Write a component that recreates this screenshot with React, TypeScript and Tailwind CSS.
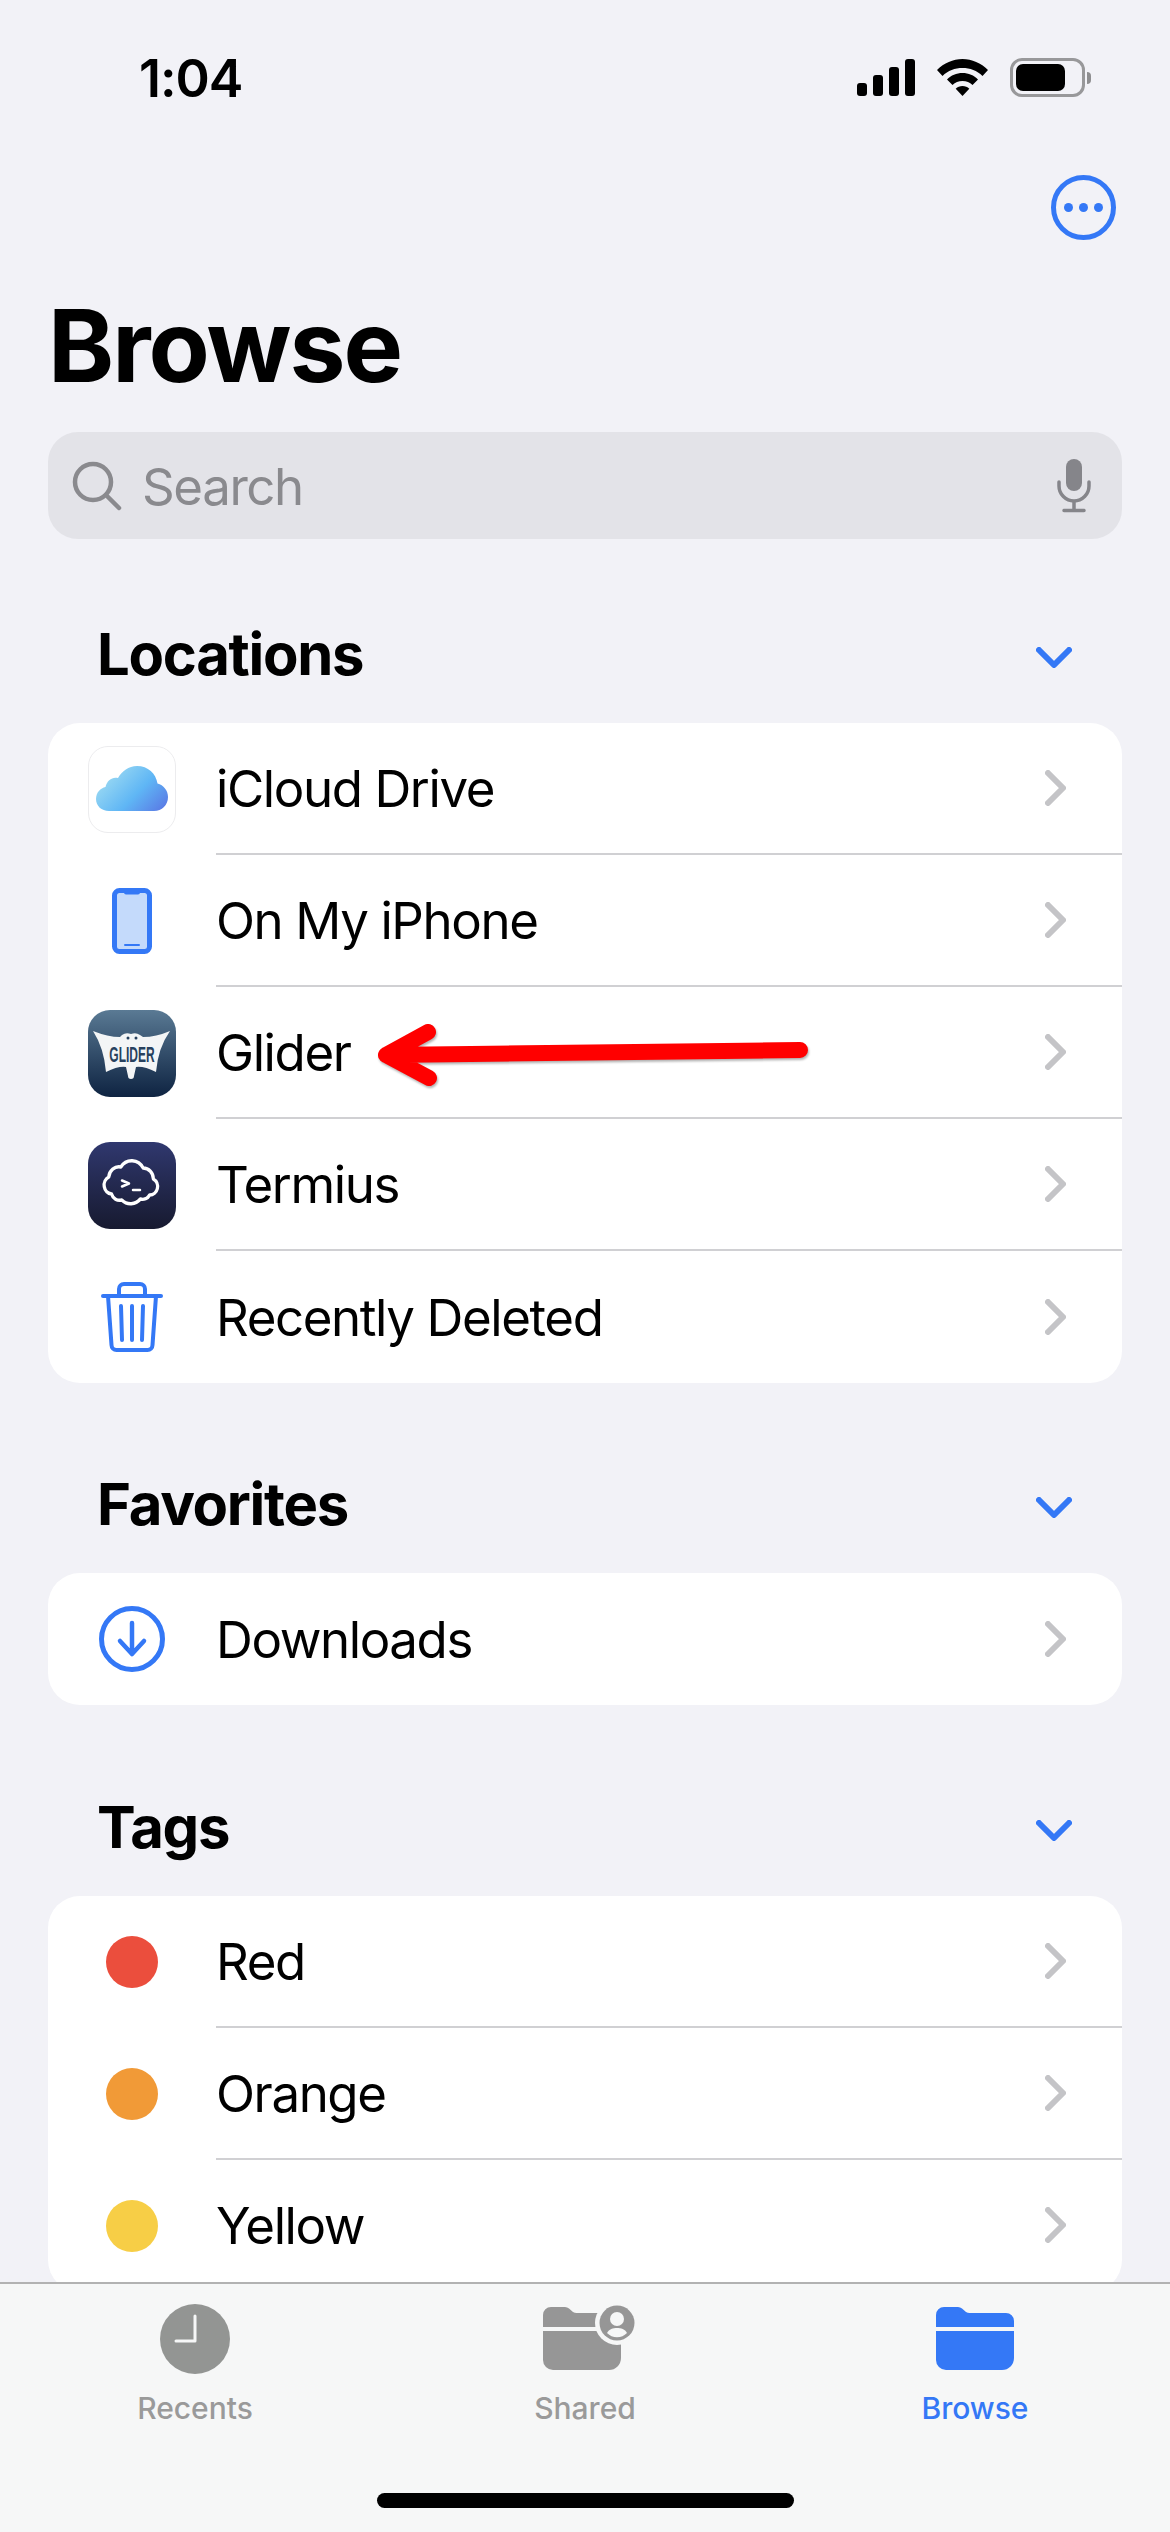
import type { ReactNode } from "react";

const BLUE = "#3478f6";

const Chevron = () => (
  <svg width="21" height="36" viewBox="0 0 21 36" fill="none" className="shrink-0">
    <path d="M3 3 18 18 3 33" stroke="#c4c4c7" strokeWidth="6" strokeLinecap="round" strokeLinejoin="round" />
  </svg>
);

const DownChevron = () => (
  <svg width="36" height="21" viewBox="0 0 36 21" fill="none" className="mt-[6px]">
    <path d="M3 3 18 18 33 3" stroke={BLUE} strokeWidth="6" strokeLinecap="round" strokeLinejoin="round" />
  </svg>
);

const ICloudIcon = () => (
  <div className="w-[88px] h-[87px] rounded-[20px] border border-[#ececee] bg-white flex items-center justify-center">
    <svg width="72" height="46" viewBox="0 0 72 46">
      <defs>
        <linearGradient id="cloud" x1="0" y1="0.2" x2="1" y2="0.8">
          <stop offset="0" stopColor="#a6e0f2" />
          <stop offset="0.6" stopColor="#5fb6f5" />
          <stop offset="1" stopColor="#5a7fe6" />
        </linearGradient>
      </defs>
      <path
        d="M13 45C5.500 45 0 40 0 33c0-6.500 4.500-11 9.500-12C11 14 16.500 10.500 22 12 26 5 32.500 0 41 0c11 0 19 7.500 20.500 17.500C67.500 19 72 24.500 72 31c0 8-6 14-14 14z"
        fill="url(#cloud)"
      />
    </svg>
  </div>
);

const PhoneIcon = () => (
  <svg width="40" height="66" viewBox="0 0 40 66">
    <rect x="2.500" y="2.500" width="35" height="61" rx="5" fill="#c4dafb" stroke={BLUE} strokeWidth="5" />
    <path d="M12 2h16v2.500a2 2 0 0 1-2 2H14a2 2 0 0 1-2-2z" fill={BLUE} />
    <rect x="12" y="56" width="16" height="2" rx="1" fill={BLUE} />
  </svg>
);

const GliderIcon = () => (
  <div className="w-[88px] h-[87px] rounded-[22px] bg-gradient-to-b from-[#5a7a94] to-[#0f2442]">
    <svg width="88" height="87" viewBox="0 0 88 87">
      <path
        d="M5 21 Q20 27 32 27 L34 25 Q38 22 43 24 Q48 22 52 25 L55 27 Q68 27 82 21 Q70 38 68 62 Q56 56 48 57 L46 66 A3 3 0 0 1 40 66 L38 57 Q30 56 18 62 Q16 38 5 21z"
        fill="#f3f5f6"
      />
      <circle cx="40" cy="28" r="1.500" fill="#27415e" />
      <circle cx="48" cy="28" r="1.500" fill="#27415e" />
      <text
        transform="translate(44 52) scale(1 1.900)"
        textAnchor="middle"
        fill="#27415e"
        className="font-['Liberation_Sans',sans-serif]"
        fontSize="12"
        fontWeight="700"
      >
        GLIDER
      </text>
    </svg>
  </div>
);

const TermiusIcon = () => (
  <div className="w-[88px] h-[87px] rounded-[22px] bg-gradient-to-b from-[#30386f] to-[#171a30]">
    <svg width="88" height="87" viewBox="0 0 88 87" fill="none">
      <path
        transform="translate(44 42) scale(0.930 1) translate(-44 -40)"
        d="M22 50A9 9 0 0 1 19 33A11 11 0 0 1 32 23A14 14 0 0 1 56 24A11 11 0 0 1 67 35A8.500 8.500 0 0 1 63 51A9 9 0 0 1 53 55A14 14 0 0 1 33 56A9 9 0 0 1 22 50Z"
        stroke="#fff"
        strokeWidth="3.500"
        strokeLinejoin="round"
      />
      <path d="M34 38.500 41 41.500 34 44.500M45 48h7" stroke="#fff" strokeWidth="2.500" strokeLinecap="round" strokeLinejoin="round" />
    </svg>
  </div>
);

const TrashIcon = () => (
  <svg width="62" height="70" viewBox="0 0 62 70" fill="none" stroke={BLUE} strokeWidth="4" strokeLinecap="round" strokeLinejoin="round">
    <path d="M2 14h58" />
    <path d="M7 14l3.500 49a5 5 0 0 0 5 5h31a5 5 0 0 0 5-5L55 14" />
    <path d="M18 13V7a5 5 0 0 1 5-5h16a5 5 0 0 1 5 5v6" />
    <path d="M20 24l1 34M31 24v34M42 24l-1 34" />
  </svg>
);

const DownloadIcon = () => (
  <svg width="66" height="66" viewBox="0 0 66 66" fill="none" stroke={BLUE} strokeLinecap="round" strokeLinejoin="round">
    <circle cx="33" cy="33" r="30.500" strokeWidth="5" />
    <path d="M33 17v31M21 35l12 13 12-13" strokeWidth="4.500" />
  </svg>
);

const Dot = ({ color }: { color: string }) => (
  <div className={`w-[52px] h-[52px] rounded-full ${color}`} />
);

const Row = ({ icon, label, last }: { icon: ReactNode; label: string; last?: boolean }) => (
  <div className="flex h-[132px] items-center pl-[40px]">
    <div className="w-[88px] shrink-0 flex items-center justify-center">{icon}</div>
    <div className={`ml-[40px] flex h-full flex-1 items-center justify-between pr-[56px] ${last ? "" : "border-b-2 border-[#d0d0d3]"}`}>
      <span className="pt-[3px] text-[51px] text-black tracking-[-1.400px]">{label}</span>
      <Chevron />
    </div>
  </div>
);

const SectionHeader = ({ title }: { title: string }) => (
  <div className="flex h-[138px] items-center justify-between pl-[49px] pr-[50px]">
    <h2 className="text-[58px] font-bold text-black tracking-[-1.300px]">{title}</h2>
    <DownChevron />
  </div>
);

const Card = ({ children }: { children: ReactNode }) => (
  <div className="rounded-[32px] bg-white overflow-hidden">{children}</div>
);

const TabItem = ({ icon, label, active }: { icon: ReactNode; label: string; active?: boolean }) => (
  <div className="flex flex-1 flex-col items-center">
    <div className="flex h-[90px] items-end justify-center">{icon}</div>
    <span className={`mt-[16px] text-[30px] leading-[36px] font-medium ${active ? "text-[#3478f6]" : "text-[#9a9a9a]"}`}>{label}</span>
  </div>
);

export default function App() {
  return (
    <div className="relative h-[2532px] w-[1170px] overflow-hidden bg-[#f2f2f7] font-['Inter',sans-serif]">
      {/* status bar */}
      <div className="flex h-[156px] items-start justify-between pl-[139px] pr-[79px] pt-[46px]">
        <span className="mt-[3px] text-[52px] leading-[60px] font-semibold text-black tracking-[-1px]">1:04</span>
        <div className="mt-[12px] flex items-center">
          <svg width="58" height="37" viewBox="0 0 58 37" fill="#000">
            <rect x="0" y="24" width="10" height="13" rx="3" />
            <rect x="16" y="16" width="10" height="21" rx="3" />
            <rect x="32" y="8" width="10" height="29" rx="3" />
            <rect x="48" y="0" width="10" height="37" rx="3" />
          </svg>
          <svg className="ml-[22px]" width="51" height="37" viewBox="0 0 51 37" fill="#000">
            <path d="M25.500 0C35 0 44 4 51 11l-5.500 6C40 11.500 33 9 25.500 9S11 11.500 5.500 17L0 11C7 4 16 0 25.500 0z" />
            <path d="M25.500 14c6 0 11.500 2.300 15.500 6.500L35.500 26c-2.700-2.600-6-4-10-4s-7.300 1.400-10 4L10 20.500C14 16.300 19.500 14 25.500 14z" />
            <path d="M25.500 27c2.700 0 5 1 6.800 2.700L25.500 37l-6.800-7.300C20.500 28 22.800 27 25.500 27z" />
          </svg>
          <div className="ml-[22px] flex items-center">
            <div className="h-[39px] w-[75px] rounded-[12px] border-[3px] border-[#98989a] p-[3px]">
              <div className="h-full w-[49px] rounded-[7px] bg-black" />
            </div>
            <div className="ml-[2px] h-[12px] w-[4px] rounded-r-full bg-[#8e8e90]" />
          </div>
        </div>
      </div>

      {/* more button */}
      <div className="flex justify-end pr-[54px] pt-[19px]">
        <svg width="65" height="65" viewBox="0 0 65 65" fill={BLUE}>
          <circle cx="32.500" cy="32.500" r="30" fill="none" stroke={BLUE} strokeWidth="5" />
          <circle cx="17.500" cy="32.500" r="4.500" />
          <circle cx="32.500" cy="32.500" r="4.500" />
          <circle cx="47.500" cy="32.500" r="4.500" />
        </svg>
      </div>

      <div className="px-[48px]">
        <h1 className="mt-[46px] text-[100px] leading-[120px] font-bold text-black tracking-[-2px]">Browse</h1>

        {/* search */}
        <div className="mt-[26px] flex h-[107px] items-center rounded-[30px] bg-[#e3e3e8] pl-[24px] pr-[30px]">
          <svg width="50" height="50" viewBox="0 0 50 50" fill="none" stroke="#8a8a8e" strokeWidth="4.500" strokeLinecap="round">
            <circle cx="21" cy="21" r="18" />
            <path d="M34 34l13 13" />
          </svg>
          <span className="ml-[20px] flex-1 pt-[3px] text-[51px] text-[#8a8a8e] tracking-[-1.400px]">Search</span>
          <svg width="36" height="54" viewBox="0 0 36 54" fill="none">
            <rect x="10" y="0" width="16" height="32" rx="8" fill="#85858a" />
            <path d="M3 23v4a15 15 0 0 0 30 0v-4M18 42v9M8 51.500h20" stroke="#85858a" strokeWidth="3.500" strokeLinecap="round" />
          </svg>
        </div>

        <div className="mt-[46px]">
          <SectionHeader title="Locations" />
          <Card>
            <Row icon={<ICloudIcon />} label="iCloud Drive" />
            <Row icon={<PhoneIcon />} label="On My iPhone" />
            <Row icon={<GliderIcon />} label="Glider" />
            <Row icon={<TermiusIcon />} label="Termius" />
            <Row icon={<TrashIcon />} label="Recently Deleted" last />
          </Card>
        </div>

        <div className="mt-[52px]">
          <SectionHeader title="Favorites" />
          <Card>
            <Row icon={<DownloadIcon />} label="Downloads" last />
          </Card>
        </div>

        <div className="mt-[53px]">
          <SectionHeader title="Tags" />
          <Card>
            <Row icon={<Dot color="bg-[#eb4e3d]" />} label="Red" />
            <Row icon={<Dot color="bg-[#f19a37]" />} label="Orange" />
            <Row icon={<Dot color="bg-[#f7ce46]" />} label="Yellow" />
          </Card>
        </div>
      </div>

      {/* red annotation arrow */}
      <svg className="absolute left-[370px] top-[1020px]" width="450" height="70" viewBox="0 0 450 70" fill="none">
        <path
          d="M430 30 16 35M58 12 16 35 59 58"
          stroke="#ff0000"
          strokeWidth="16"
          strokeLinecap="round"
          strokeLinejoin="round"
          className="drop-shadow-[1px_2px_1px_rgba(0,0,0,0.3)]"
        />
      </svg>

      {/* tab bar */}
      <div className="absolute bottom-0 left-0 right-0 h-[250px] border-t-2 border-[#b2b2b2] bg-[#f6f7f7]">
        <div className="flex">
          <TabItem
            label="Recents"
            icon={
              <svg width="70" height="70" viewBox="0 0 70 70">
                <circle cx="35" cy="35" r="35" fill="#939593" />
                <path d="M35 12v25H16" fill="none" stroke="#f6f7f7" strokeWidth="3" strokeLinecap="round" strokeLinejoin="round" />
              </svg>
            }
          />
          <TabItem
            label="Shared"
            icon={
              <svg className="ml-[8px]" width="92" height="69" viewBox="0 0 92 69">
                <path d="M0 22V10a8 8 0 0 1 8-8h14a7 7 0 0 1 4 1.500l4 3.500a7 7 0 0 0 4 1h36a8 8 0 0 1 8 8v6z" fill="#969696" />
                <path d="M0 26h78v27a12 12 0 0 1-12 12H10A10 10 0 0 1 0 55z" fill="#969696" />
                <circle cx="74" cy="18" r="22" fill="#f6f7f7" />
                <circle cx="74" cy="18" r="17.500" fill="#969696" />
                <circle cx="74" cy="14" r="7" fill="#f6f7f7" />
                <path d="M64 28c2-4 6-5 10-5s8 1 10 5a14 14 0 0 1-20 0z" fill="#f6f7f7" />
              </svg>
            }
          />
          <TabItem
            active
            label="Browse"
            icon={
              <svg width="78" height="69" viewBox="0 0 78 69" fill={BLUE}>
                <path d="M0 22V10a8 8 0 0 1 8-8h14a7 7 0 0 1 4 1.500l4 3.500a7 7 0 0 0 4 1h36a8 8 0 0 1 8 8v6z" />
                <path d="M0 26h78v27a12 12 0 0 1-12 12H10A10 10 0 0 1 0 55z" />
              </svg>
            }
          />
        </div>
        <div className="absolute bottom-[24px] left-[377px] h-[15px] w-[417px] rounded-full bg-black" />
      </div>
    </div>
  );
}
